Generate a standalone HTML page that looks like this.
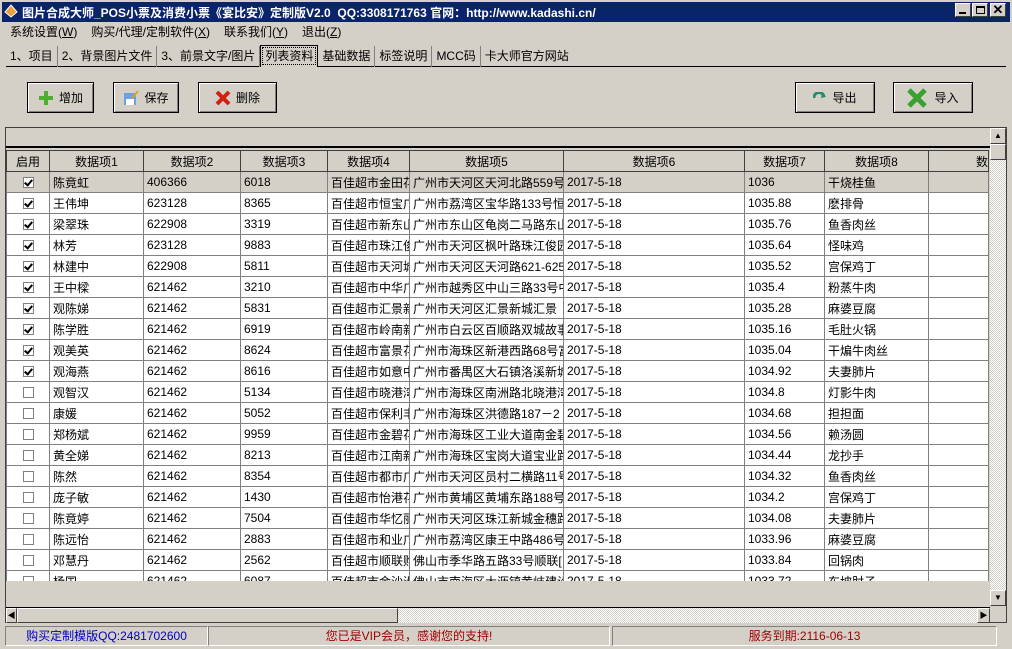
<!DOCTYPE html>
<html><head><meta charset="utf-8">
<style>
*{margin:0;padding:0;box-sizing:border-box}
body{width:1012px;height:649px;background:#d4d0c8;font-family:"Liberation Sans","Noto Sans CJK SC",sans-serif;font-size:12px;color:#000;position:relative;overflow:hidden}
.abs{position:absolute}
#title{left:0;top:0;width:1012px;height:22px;background:#0a246a;color:#fff;font-weight:bold;font-size:12px;line-height:22px;padding-left:20px;white-space:nowrap;border:2px solid #d4d0c8;border-bottom:none}
.wb{position:absolute;top:3px;width:16px;height:14px;background:#d4d0c8;border:1px solid;border-color:#fff #404040 #404040 #fff}
#menu{left:10px;top:23px;height:18px;line-height:18px;white-space:nowrap}
#menu span{margin-right:14px}
#tabs{left:6px;top:45px;height:22px;width:1000px;border-bottom:1px solid #000}
#tabs span{display:inline-block;height:21px;line-height:21px;padding:0 4px;border-right:1px solid #808080}
#tabs span.act{border:1px solid #000;border-bottom:none;background:#d4d0c8;outline:1px dotted #000;outline-offset:-3px;height:22px}
.btn{position:absolute;top:82px;height:31px;border:1px solid #000;box-shadow:inset 1px 1px #fff,inset -1px -1px #808080;display:flex;align-items:center;justify-content:center;font-size:12px}
.btn svg{margin-right:5px}
#grid{left:5px;top:127px;width:1002px;height:496px;border:1px solid #404040;background:#d4d0c8}
table{border-collapse:collapse;table-layout:fixed;position:absolute;left:0;top:0;width:982px}
td{height:21px;border:1px solid #808080;white-space:nowrap;overflow:hidden;padding-left:3px;font-size:12px;background:#fff;text-overflow:clip}
tr.h td{background:#d4d0c8;text-align:center;padding:0;border-color:#404040}
tr.sel td{background:#d4d0c8}
td.c{text-align:center;padding:0}
.cb{display:inline-block;width:11px;height:11px;border:1px solid #808080;background:#fff;vertical-align:middle;position:relative}
.cb.on::after{content:"";position:absolute;left:2px;top:0px;width:3px;height:6px;border:solid #000;border-width:0 2px 2px 0;transform:rotate(40deg)}
#status{left:3px;top:626px;height:20px;width:1006px}
.sp{position:absolute;top:0;height:20px;border:1px solid;border-color:#808080 #fff #fff #808080;text-align:center;line-height:18px;font-size:12px}
.chk{background-color:#ece9e2;background-image:repeating-conic-gradient(#fff 0 25%,#d4d0c8 0 50%);background-size:2px 2px}
.sb{position:absolute;background:#d4d0c8;border:1px solid;border-color:#fff #404040 #404040 #fff}
</style></head><body>
<div id="title" class="abs">图片合成大师_POS小票及消费小票《宴比安》定制版V2.0&nbsp; QQ:3308171763 官网：http://www.kadashi.cn/</div>
<svg class="abs" style="left:4px;top:4px" width="14" height="14"><path d="M1 8 L7 1 L13 8 L7 13Z" fill="#e8a040" stroke="#fff" stroke-width="1"/></svg>
<div class="wb" style="left:955px"><div style="position:absolute;left:3px;bottom:2px;width:7px;height:2px;background:#000"></div></div>
<div class="wb" style="left:972px"><div style="position:absolute;left:3px;top:2px;width:9px;height:8px;border:1px solid #000;border-top-width:2px"></div></div>
<div class="wb" style="left:990px;font-weight:bold;line-height:12px;text-align:center;font-size:13px">✕</div>
<div id="menu" class="abs"><span>系统设置(<u>W</u>)</span><span>购买/代理/定制软件(<u>X</u>)</span><span>联系我们(<u>Y</u>)</span><span>退出(<u>Z</u>)</span></div>
<div id="tabs" class="abs"><span>1、项目</span><span>2、背景图片文件</span><span>3、前景文字/图片</span><span class="act">列表资料</span><span>基础数据</span><span>标签说明</span><span>MCC码</span><span style="border:none">卡大师官方网站</span></div>

<div class="btn" style="left:27px;width:67px"><svg width="16" height="16"><path d="M6 1h4v5h5v4h-5v5H6v-5H1V6h5z" fill="#4caf30"/></svg>增加</div>
<div class="btn" style="left:113px;width:66px"><svg width="16" height="16"><rect x="1" y="3" width="12" height="12" fill="#6fa0e0"/><rect x="3" y="9" width="8" height="6" fill="#fff"/><path d="M9 8l6-7" stroke="#e0a020" stroke-width="2"/></svg>保存</div>
<div class="btn" style="left:198px;width:79px"><svg width="16" height="16"><path d="M2 2L14 14M14 2L2 14" stroke="#d02010" stroke-width="4"/></svg>删除</div>
<div class="btn" style="left:795px;width:80px"><svg width="14" height="12"><path d="M1 6a5 5 0 0 1 10-1" stroke="#2a8a70" stroke-width="3" fill="none"/><path d="M9 1l4 4-5 1z" fill="#2a8a70"/></svg>导出</div>
<div class="btn" style="left:893px;width:80px"><svg width="22" height="20"><path d="M2 2L18 18M18 2L2 18" stroke="#3aa030" stroke-width="5"/></svg>导入</div>

<div id="grid" class="abs">
<div style="position:absolute;left:0;top:0;width:984px;height:20px;background:#d4d0c8;border-bottom:2px solid #000"></div>
<div style="position:absolute;left:0;top:22px;width:984px;height:431px;overflow:hidden">
<table>
<colgroup><col style="width:43px"><col style="width:94px"><col style="width:97px"><col style="width:87px"><col style="width:82px"><col style="width:154px"><col style="width:181px"><col style="width:80px"><col style="width:104px"><col style="width:60px"></colgroup>
<tr class="h"><td>启用</td><td>数据项1</td><td>数据项2</td><td>数据项3</td><td>数据项4</td><td>数据项5</td><td>数据项6</td><td>数据项7</td><td>数据项8</td><td style="text-align:right">数</td></tr>
<tr class="sel"><td class="c"><span class="cb on"></span></td><td>陈竟虹</td><td>406366</td><td>6018</td><td>百佳超市金田花园</td><td>广州市天河区天河北路559号</td><td>2017-5-18</td><td>1036</td><td>干烧桂鱼</td><td></td></tr>
<tr><td class="c"><span class="cb on"></span></td><td>王伟坤</td><td>623128</td><td>8365</td><td>百佳超市恒宝广场</td><td>广州市荔湾区宝华路133号恒</td><td>2017-5-18</td><td>1035.88</td><td>麽排骨</td><td></td></tr>
<tr><td class="c"><span class="cb on"></span></td><td>梁翠珠</td><td>622908</td><td>3319</td><td>百佳超市新东山</td><td>广州市东山区龟岗二马路东山</td><td>2017-5-18</td><td>1035.76</td><td>鱼香肉丝</td><td></td></tr>
<tr><td class="c"><span class="cb on"></span></td><td>林芳</td><td>623128</td><td>9883</td><td>百佳超市珠江俊</td><td>广州市天河区枫叶路珠江俊园</td><td>2017-5-18</td><td>1035.64</td><td>怪味鸡</td><td></td></tr>
<tr><td class="c"><span class="cb on"></span></td><td>林建中</td><td>622908</td><td>5811</td><td>百佳超市天河城</td><td>广州市天河区天河路621-625</td><td>2017-5-18</td><td>1035.52</td><td>宫保鸡丁</td><td></td></tr>
<tr><td class="c"><span class="cb on"></span></td><td>王中樑</td><td>621462</td><td>3210</td><td>百佳超市中华广</td><td>广州市越秀区中山三路33号中</td><td>2017-5-18</td><td>1035.4</td><td>粉蒸牛肉</td><td></td></tr>
<tr><td class="c"><span class="cb on"></span></td><td>观陈娣</td><td>621462</td><td>5831</td><td>百佳超市汇景新</td><td>广州市天河区汇景新城汇景</td><td>2017-5-18</td><td>1035.28</td><td>麻婆豆腐</td><td></td></tr>
<tr><td class="c"><span class="cb on"></span></td><td>陈学胜</td><td>621462</td><td>6919</td><td>百佳超市岭南新</td><td>广州市白云区百顺路双城故事</td><td>2017-5-18</td><td>1035.16</td><td>毛肚火锅</td><td></td></tr>
<tr><td class="c"><span class="cb on"></span></td><td>观美英</td><td>621462</td><td>8624</td><td>百佳超市富景花</td><td>广州市海珠区新港西路68号富</td><td>2017-5-18</td><td>1035.04</td><td>干煸牛肉丝</td><td></td></tr>
<tr><td class="c"><span class="cb on"></span></td><td>观海燕</td><td>621462</td><td>8616</td><td>百佳超市如意中</td><td>广州市番禺区大石镇洛溪新城</td><td>2017-5-18</td><td>1034.92</td><td>夫妻肺片</td><td></td></tr>
<tr><td class="c"><span class="cb"></span></td><td>观智汉</td><td>621462</td><td>5134</td><td>百佳超市晓港湾</td><td>广州市海珠区南洲路北晓港湾</td><td>2017-5-18</td><td>1034.8</td><td>灯影牛肉</td><td></td></tr>
<tr><td class="c"><span class="cb"></span></td><td>康媛</td><td>621462</td><td>5052</td><td>百佳超市保利丰</td><td>广州市海珠区洪德路187－2</td><td>2017-5-18</td><td>1034.68</td><td>担担面</td><td></td></tr>
<tr><td class="c"><span class="cb"></span></td><td>郑杨斌</td><td>621462</td><td>9959</td><td>百佳超市金碧花</td><td>广州市海珠区工业大道南金碧</td><td>2017-5-18</td><td>1034.56</td><td>赖汤圆</td><td></td></tr>
<tr><td class="c"><span class="cb"></span></td><td>黄全娣</td><td>621462</td><td>8213</td><td>百佳超市江南新</td><td>广州市海珠区宝岗大道宝业路</td><td>2017-5-18</td><td>1034.44</td><td>龙抄手</td><td></td></tr>
<tr><td class="c"><span class="cb"></span></td><td>陈然</td><td>621462</td><td>8354</td><td>百佳超市都市广</td><td>广州市天河区员村二横路11号</td><td>2017-5-18</td><td>1034.32</td><td>鱼香肉丝</td><td></td></tr>
<tr><td class="c"><span class="cb"></span></td><td>庞子敏</td><td>621462</td><td>1430</td><td>百佳超市怡港花</td><td>广州市黄埔区黄埔东路188号</td><td>2017-5-18</td><td>1034.2</td><td>宫保鸡丁</td><td></td></tr>
<tr><td class="c"><span class="cb"></span></td><td>陈竟婷</td><td>621462</td><td>7504</td><td>百佳超市华忆丽</td><td>广州市天河区珠江新城金穗路</td><td>2017-5-18</td><td>1034.08</td><td>夫妻肺片</td><td></td></tr>
<tr><td class="c"><span class="cb"></span></td><td>陈远怡</td><td>621462</td><td>2883</td><td>百佳超市和业广</td><td>广州市荔湾区康王中路486号</td><td>2017-5-18</td><td>1033.96</td><td>麻婆豆腐</td><td></td></tr>
<tr><td class="c"><span class="cb"></span></td><td>邓慧丹</td><td>621462</td><td>2562</td><td>百佳超市顺联购</td><td>佛山市季华路五路33号顺联[</td><td>2017-5-18</td><td>1033.84</td><td>回锅肉</td><td></td></tr>
<tr><td class="c"><span class="cb"></span></td><td>杨国</td><td>621462</td><td>6087</td><td>百佳超市金沙洲</td><td>佛山市南海区大沥镇黄岐建设</td><td>2017-5-18</td><td>1033.72</td><td>东坡肘子</td><td></td></tr>
</table></div>
<div class="chk" style="position:absolute;left:984px;top:0;width:16px;height:478px"></div>
<div class="sb" style="left:984px;top:0;width:16px;height:16px;font-size:8px;text-align:center;line-height:14px">▲</div>
<div class="sb" style="left:984px;top:16px;width:16px;height:16px"></div>
<div class="sb" style="left:984px;top:462px;width:16px;height:16px;font-size:8px;text-align:center;line-height:14px">▼</div>
<div class="chk" style="position:absolute;left:0;top:479px;width:984px;height:16px;border-top:1px solid #000"></div>
<div class="sb" style="left:0;top:480px;width:11px;height:15px;font-size:8px;text-align:center;line-height:13px">◀</div>
<div class="sb" style="left:11px;top:480px;width:381px;height:15px"></div>
<div class="sb" style="left:971px;top:480px;width:13px;height:15px;font-size:8px;text-align:center;line-height:13px">▶</div>
</div>

<div id="status" class="abs">
<div class="sp" style="left:2px;width:203px;color:#0000c0">购买定制模版QQ:2481702600</div>
<div class="sp" style="left:205px;width:402px;color:#a00000">您已是VIP会员，感谢您的支持!</div>
<div class="sp" style="left:609px;width:385px;color:#a00000">服务到期:2116-06-13</div>
</div>
</body></html>
